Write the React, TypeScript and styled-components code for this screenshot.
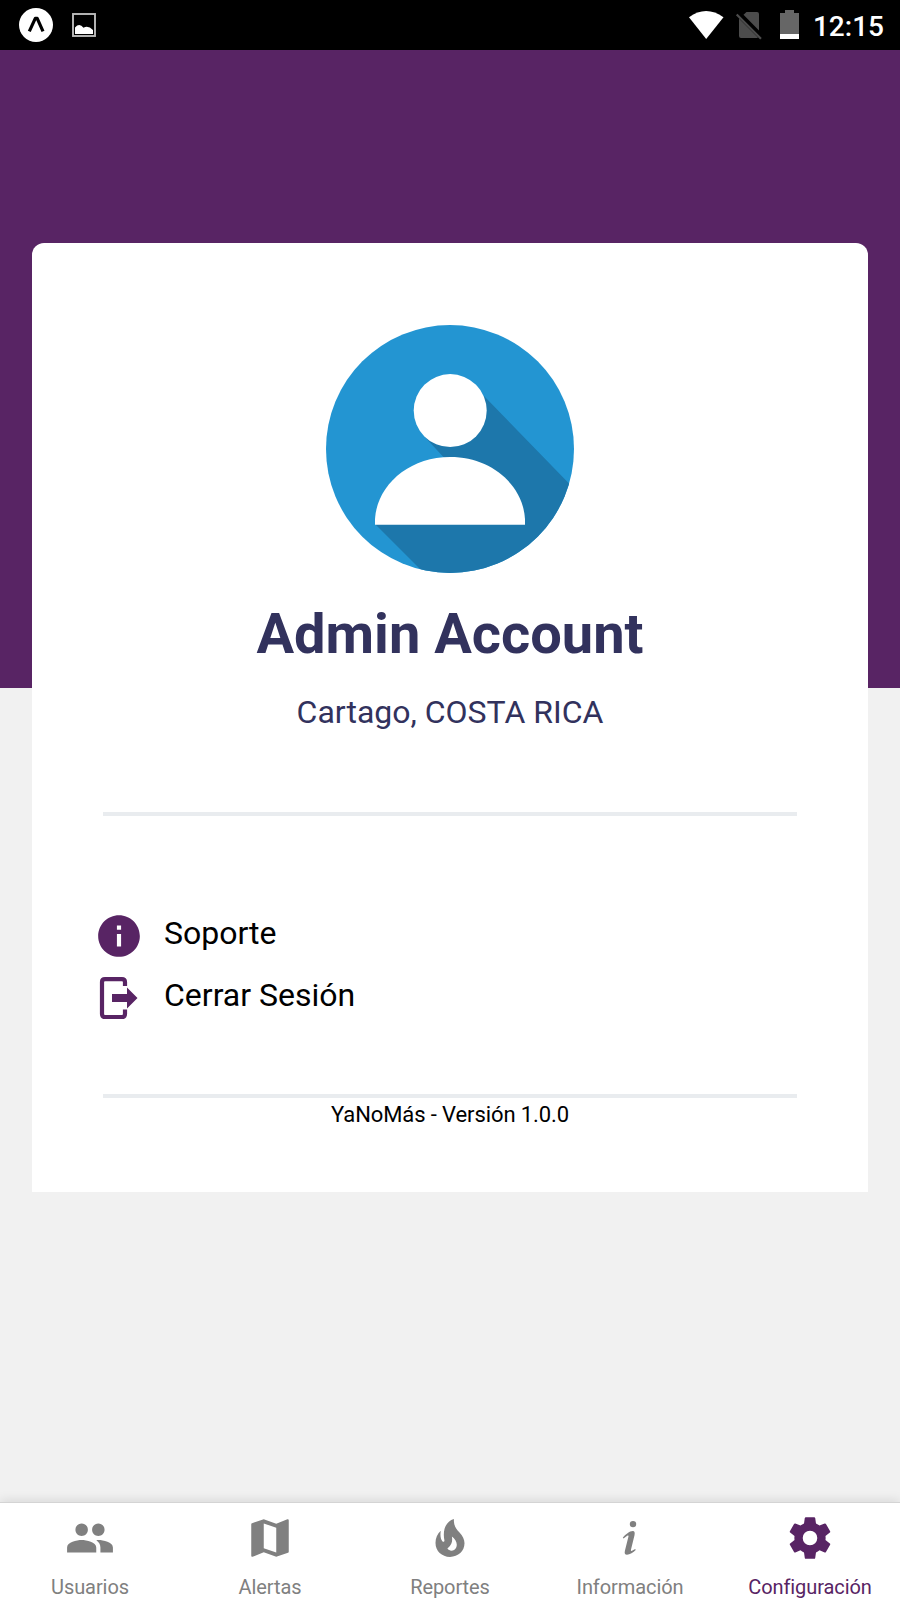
import React from "react";
import styled, { createGlobalStyle } from "styled-components";
import { MdPeople, MdMap, MdInfo } from "react-icons/md";

interface TabProps {
  label: string;
  active?: boolean;
  children: React.ReactNode;
}

function Tab({ label, active = false, children }: TabProps) {
  return (
    <TabButton $active={active}>
      <TabIcon>{children}</TabIcon>
      <TabLabel>{label}</TabLabel>
    </TabButton>
  );
}

function Avatar() {
  return (
    <svg width="248" height="248" viewBox="0 0 248 248">
      <defs>
        <clipPath id="disc">
          <circle cx="124" cy="124" r="124" />
        </clipPath>
      </defs>
      <circle cx="124" cy="124" r="124" fill="#2395d2" />
      <g clipPath="url(#disc)" fill="#1d77ab">
        <path d="M158 71 L243 158.500 L300 216 V300 H150 L49 199 H199 L134 150 L98 111 Z" />
      </g>
      <circle cx="124.2" cy="85.6" r="36.5" fill="#fff" />
      <path
        d="M49 199.7 V194 C51 160 83 132 124.2 132 S197 160 199 194 V199.7 Z"
        fill="#fff"
      />
    </svg>
  );
}

function FlameIcon() {
  return (
    <svg width="50" height="50" viewBox="0 3 50 50" fill="currentColor">
      <path
        fillRule="evenodd"
        d="M28.900 9 C28.600 15.500 31 18.800 34.300 22.300 C37.800 26 39.500 29.500 39.500 33.300 C39.500 41 33.200 46.900 25 46.900 C16.800 46.900 10.500 41 10.500 33 C10.500 28 12.300 24 15.800 20.700 C15 25 15.600 28.800 17.200 31 C18.200 32.500 19.700 31.900 19.400 30.200 C17.400 20.500 20.500 11.500 28.900 9 Z M26.900 26.400 C27.600 31 27.300 34.600 22.400 38.600 C24.500 41.700 29.400 41.300 31.100 37.700 C33 33.700 30.700 29 26.900 26.400 Z"
      />
    </svg>
  );
}

function InfoIcon() {
  return (
    <svg width="50" height="50" viewBox="0 0 50 50" fill="currentColor">
      <circle cx="28" cy="11.100" r="3.200" />
      <path d="M17.800 24.800 C20.300 21.600 24.600 18.100 27.800 18.100 C29.800 18.100 30 19.900 29.500 22.200 L26 36.600 C25.700 37.900 26.200 38.100 27 37.700 L30.200 36 L30.700 37 C28.600 39.600 24.600 41.700 22 41.700 C19.900 41.700 19.300 40.300 19.900 37.700 L23.400 23.800 C23.700 22.600 23.200 22.300 22.200 22.800 L18.500 25.500 Z" />
    </svg>
  );
}

function GearIcon() {
  return (
    <svg width="50" height="50" viewBox="0 0 24 24" fill="currentColor">
      <path d="M12 15.5A3.5 3.5 0 0 1 8.500 12 3.500 3.500 0 0 1 12 8.500a3.500 3.500 0 0 1 3.500 3.500 3.500 3.500 0 0 1-3.500 3.500m7.430-2.530c.04-.32.07-.64.07-.97s-.03-.66-.07-1l2.110-1.630c.19-.15.24-.42.12-.64l-2-3.460c-.12-.22-.39-.31-.61-.22l-2.490 1c-.52-.39-1.060-.73-1.690-.98l-.37-2.650A.506.506 0 0 0 14 2h-4c-.25 0-.46.18-.5.42l-.37 2.650c-.63.25-1.170.59-1.690.98l-2.490-1c-.22-.09-.49 0-.61.22l-2 3.460c-.13.22-.07.49.12.64L4.570 11c-.04.34-.07.67-.07 1s.03.65.07.97l-2.110 1.660c-.19.15-.25.42-.12.64l2 3.460c.12.22.39.3.61.22l2.490-1.010c.52.4 1.060.74 1.690.99l.37 2.650c.04.24.25.42.5.42h4c.25 0 .46-.18.5-.42l.37-2.650c.63-.26 1.170-.59 1.690-.99l2.490 1.010c.22.08.49 0 .61-.22l2-3.460c.12-.22.07-.49-.12-.64z" />
    </svg>
  );
}

export default function App() {
  return (
    <Screen>
      <GlobalStyle />
      <StatusBar>
        <StatusGroup>
          <svg width="34" height="34" viewBox="0 0 34 34">
            <circle cx="17" cy="17" r="17" fill="#fff" />
            <path
              d="M10.300 23.300 L16.300 10.300 H18.200 L24 23.300"
              fill="none"
              stroke="#000"
              strokeWidth="3.200"
              strokeLinejoin="round"
            />
          </svg>
          <svg width="24" height="24" viewBox="0 0 24 24">
            <rect x="1" y="1" width="22" height="22" fill="none" stroke="#bbb" strokeWidth="1.900" />
            <path
              d="M3 21 V14.500 Q7.500 9.500 11.500 14.800 Q16 12 21 17 V21 Z"
              fill="#fff"
            />
          </svg>
        </StatusGroup>
        <StatusGroup>
          <StatusIcons>
            <svg width="112" height="50" viewBox="0 0 112 50">
              <path d="M0 17.2 Q17 5 34.5 17.2 L17.2 39 Z" fill="#fff" />
              <path
                d="M54.5 14.8 L57.5 12 H68 Q70 12 70 14 V30.5 Z M50 18.5 L69 37.6 Q68.500 38 68 38 H52 Q50 38 50 36 Z"
                fill="#4c4c4c"
              />
              <path d="M47.700 14.500 L72 38.800" stroke="#4c4c4c" strokeWidth="2.200" />
              <path d="M91 13 H96 V10 H105 V13 H110 V34 H91 Z" fill="#666" />
              <rect x="91" y="34" width="19" height="5" fill="#fff" />
            </svg>
          </StatusIcons>
          <Clock>12:15</Clock>
        </StatusGroup>
      </StatusBar>
      <Header />
      <Card>
        <Avatar />
        <UserName>Admin Account</UserName>
        <Location>Cartago, COSTA RICA</Location>
        <Divider />
        <Menu>
          <MenuItem>
            <MdInfo size={50} />
            <span>Soporte</span>
          </MenuItem>
          <MenuItem>
            <svg width="50" height="50" viewBox="0 0 50 50">
              <path
                d="M31 13 V9 Q31 6.100 28 6.100 H11 Q8 6.100 8 9 V41 Q8 44 11 44 H28 Q31 44 31 41 V36.500"
                fill="none"
                stroke="#582464"
                strokeWidth="4.200"
              />
              <path d="M18 21 H33 V14.500 L43.500 25 L33 35.500 V29 H18 Z" fill="#582464" />
            </svg>
            <span>Cerrar Sesión</span>
          </MenuItem>
        </Menu>
        <Divider />
        <Version>YaNoMás - Versión 1.0.0</Version>
      </Card>
      <TabBar>
        <Tab label="Usuarios">
          <MdPeople size={50} />
        </Tab>
        <Tab label="Alertas">
          <MdMap size={50} />
        </Tab>
        <Tab label="Reportes">
          <FlameIcon />
        </Tab>
        <Tab label="Información">
          <InfoIcon />
        </Tab>
        <Tab label="Configuración" active>
          <GearIcon />
        </Tab>
      </TabBar>
    </Screen>
  );
}

const GlobalStyle = createGlobalStyle`
  body {
    margin: 0;
    font-family: Roboto, sans-serif;
  }
`;

const Screen = styled.div`
  height: 1600px;
  display: flex;
  flex-direction: column;
  background-color: #f1f1f1;
  overflow: hidden;
`;

const StatusBar = styled.div`
  height: 50px;
  flex-shrink: 0;
  box-sizing: border-box;
  padding: 0 16px 0 19px;
  display: flex;
  align-items: center;
  justify-content: space-between;
  background-color: #000;
`;

const StatusGroup = styled.div`
  display: flex;
  align-items: center;
  gap: 19px;
`;

const StatusIcons = styled.div`
  display: flex;
  margin-right: -7px;
`;

const Clock = styled.span`
  padding-top: 3px;
  color: #fff;
  font-size: 28px;
  font-weight: 500;
  line-height: 47px;
`;

const Header = styled.div`
  height: 638px;
  flex-shrink: 0;
  background-color: #582464;
`;

const Card = styled.div`
  height: 949px;
  flex-shrink: 0;
  box-sizing: border-box;
  margin: -445px 32px 0;
  padding-top: 82px;
  display: flex;
  flex-direction: column;
  align-items: center;
  border-radius: 12px 12px 0 0;
  background-color: #fff;
`;

const UserName = styled.h1`
  margin: 28px 0 0;
  color: #32325d;
  font-size: 56px;
  font-weight: 700;
  line-height: 66px;
`;

const Location = styled.p`
  margin: 25px 0 80px;
  color: #32325d;
  font-size: 32px;
  line-height: 40px;
`;

const Divider = styled.div`
  width: 694px;
  height: 4px;
  flex-shrink: 0;
  background-color: #e9ecef;
`;

const Menu = styled.div`
  width: 694px;
  height: 278px;
  box-sizing: border-box;
  padding-top: 94px;
`;

const MenuItem = styled.div`
  height: 62px;
  margin-left: -9px;
  display: flex;
  gap: 20px;
  color: #000;
  font-size: 32px;
  line-height: 46px;

  svg {
    margin-top: 1px;
    color: #582464;
  }
`;

const Version = styled.p`
  margin: 3px 0 0;
  font-size: 22px;
  line-height: 28px;
  letter-spacing: -0.1px;
`;

const TabBar = styled.div`
  height: 97px;
  flex-shrink: 0;
  margin-top: auto;
  display: grid;
  grid-template-columns: repeat(5, 1fr);
  background-color: #fff;
  border-top: 1px solid #d4d4d4;
  box-shadow: 0 -2px 10px rgba(0, 0, 0, 0.1);
`;

const TabButton = styled.button<{ $active: boolean }>`
  padding: 0;
  border: none;
  background: none;
  display: flex;
  flex-direction: column;
  align-items: center;
  color: ${(props) => (props.$active ? "#582464" : "#808080")};
  font-family: inherit;
`;

const TabIcon = styled.div`
  height: 70px;
  display: flex;
  align-items: center;
`;

const TabLabel = styled.span`
  padding-top: 1px;
  font-size: 20px;
  line-height: 27px;
  letter-spacing: -0.08px;
`;
